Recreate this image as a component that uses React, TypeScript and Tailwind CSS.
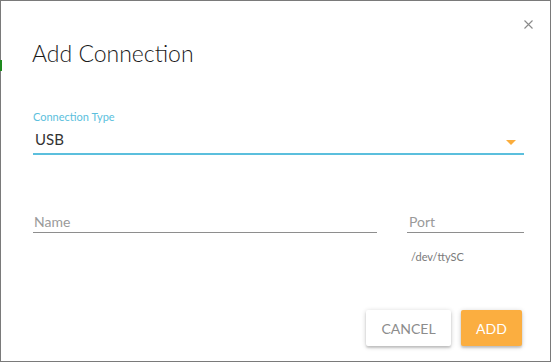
import React from "react";

export default function App() {
  return (
    <div className="w-[552px] h-[363px] bg-white" style={{ fontFamily: "Lato, 'Open Sans', sans-serif" }}>
      <div className="relative w-[551px] h-[362px] border border-[#7a7a7a] bg-white pl-[32px] pr-[26px]">
        <div className="absolute left-[-1px] top-[59px] w-[2px] h-[11px] bg-[#1e8a1e]" />
        <svg className="absolute left-[522px] top-[18px]" width="11" height="11" viewBox="0 0 11 11">
          <path d="M1.5 1.5 L9.5 9.5 M9.5 1.5 L1.5 9.5" stroke="#8a8a8a" strokeWidth="1.1" fill="none" />
        </svg>
        <div className="mt-[39px] ml-[-1px] text-[23px] leading-[26px] font-light text-[#1a1a1a]">Add Connection</div>
        <div className="mt-[44px] text-[11px] leading-[13px] text-[#5bbfdd]">Connection Type</div>
        <div className="relative mt-[7px] pb-[5px] border-b-2 border-[#5bbfdd]">
          <div className="pl-[2px] text-[15px] leading-[18px] text-[#333]">USB</div>
          <svg className="absolute right-[8px] top-[10px]" width="10" height="5" viewBox="0 0 10 5">
            <path d="M0 0 L10 0 L5 5 Z" fill="#fbad3c" />
          </svg>
        </div>
        <div className="mt-[58px] flex items-start gap-[30px]">
          <div className="w-[344px] border-b border-[#8e8e8e] pb-[2px]">
            <div className="pl-[1px] text-[14px] leading-[17px] text-[#9a9a9a]">Name</div>
          </div>
          <div className="flex-1">
            <div className="border-b border-[#8e8e8e] pb-[2px]">
              <div className="pl-[2px] text-[14px] leading-[17px] text-[#9a9a9a]">Port</div>
            </div>
            <div className="mt-[17px] pl-[4px] text-[11px] leading-[13px] text-[#7a7a7a]">/dev/ttySC</div>
          </div>
        </div>
        <div className="mt-[47px] flex justify-end gap-[10px] pr-[2px]">
          <button className="w-[85px] h-[36px] rounded-[2px] bg-white text-[14px] text-[#8c8c8c] shadow-[0_1px_5px_rgba(0,0,0,0.2),0_2px_2px_rgba(0,0,0,0.14)]">
            CANCEL
          </button>
          <button className="w-[61px] h-[36px] rounded-[2px] bg-[#fbae40] text-[14px] text-white shadow-[0_1px_5px_rgba(0,0,0,0.2),0_2px_2px_rgba(0,0,0,0.14)]">
            ADD
          </button>
        </div>
      </div>
    </div>
  );
}
